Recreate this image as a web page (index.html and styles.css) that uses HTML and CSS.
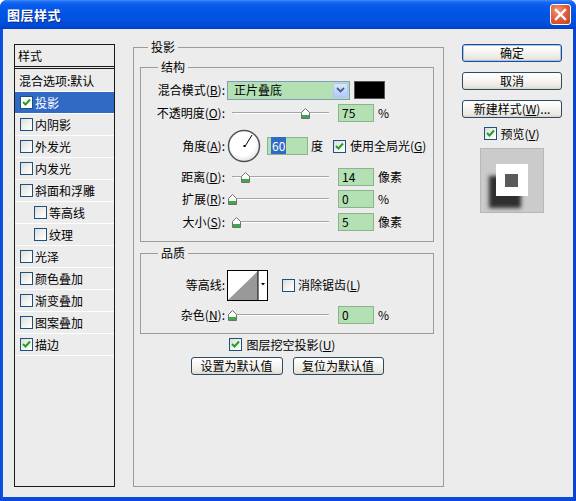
FILE: index.html
```html
<!DOCTYPE html>
<html lang="zh-CN">
<head>
<meta charset="utf-8">
<title>图层样式</title>
<link rel="stylesheet" href="styles.css">
</head>
<body>
<div class="window">
  <div class="titlebar">
    <span class="title">图层样式</span>
    <span class="close"><svg width="19" height="19" viewBox="0 0 19 19"><path d="M5 5 L14 14 M14 5 L5 14" stroke="#fff" stroke-width="2.4" stroke-linecap="square"/></svg></span>
  </div>
  <div class="client">
    <div class="styles-list">
      <div class="list-head">样式</div>
      <div class="list-item first">混合选项:默认</div>
      <div class="list-item selected"><span class="cb"><svg viewBox="0 0 11 11"><path d="M2 5 L4.5 7.5 L9 2.5" fill="none" stroke="#21A121" stroke-width="2"/></svg></span>投影</div>
      <div class="list-item"><span class="cb"></span>内阴影</div>
      <div class="list-item"><span class="cb"></span>外发光</div>
      <div class="list-item"><span class="cb"></span>内发光</div>
      <div class="list-item"><span class="cb"></span>斜面和浮雕</div>
      <div class="list-item sub"><span class="cb"></span>等高线</div>
      <div class="list-item sub"><span class="cb"></span>纹理</div>
      <div class="list-item"><span class="cb"></span>光泽</div>
      <div class="list-item"><span class="cb"></span>颜色叠加</div>
      <div class="list-item"><span class="cb"></span>渐变叠加</div>
      <div class="list-item"><span class="cb"></span>图案叠加</div>
      <div class="list-item"><span class="cb"><svg viewBox="0 0 11 11"><path d="M2 5 L4.5 7.5 L9 2.5" fill="none" stroke="#21A121" stroke-width="2"/></svg></span>描边</div>
    </div>

    <div class="group main-group">
      <div class="legend main-legend">投影</div>

      <div class="group sub-group structure">
        <div class="legend sub-legend">结构</div>
        <div class="rows">
          <div class="row r-blend">
            <span class="label">混合模式(<u>B</u>):</span>
            <div class="select"><span class="select-text">正片叠底</span><span class="select-btn"><svg width="9" height="6" viewBox="0 0 9 6"><path d="M1 1 L4.5 4.5 L8 1" fill="none" stroke="#4D6185" stroke-width="1.8"/></svg></span></div>
            <span class="swatch"></span>
          </div>
          <div class="row r-opacity">
            <span class="label">不透明度(<u>O</u>):</span>
            <div class="slider"><span class="track"></span><svg class="thumb" style="left:74px" width="9" height="11" viewBox="0 0 9 11"><path d="M4.5 0.5 L8.5 4.5 L8.5 10.5 L0.5 10.5 L0.5 4.5 Z" fill="#fff" stroke="#707070"/><rect x="1" y="7" width="7" height="3" fill="#3DA94B"/></svg></div>
            <div class="num">75</div>
            <span class="unit">%</span>
          </div>
          <div class="row r-angle">
            <span class="label">角度(<u>A</u>):</span>
            <svg class="dial" width="34" height="34" viewBox="0 0 34 34"><defs><radialGradient id="dg" cx="0.45" cy="0.4" r="0.6"><stop offset="0.7" stop-color="#ffffff"/><stop offset="1" stop-color="#e2e2e2"/></radialGradient></defs><circle cx="17" cy="17" r="15.5" fill="url(#dg)" stroke="#4F5358" stroke-width="1.5"/><path d="M18 17.5 L25 6" stroke="#000" stroke-width="1"/><rect x="16.5" y="16" width="2" height="2" fill="#000"/></svg>
            <div class="num angle-num"><span class="sel">60</span></div>
            <span class="unit deg">度</span>
            <span class="cb global"><svg viewBox="0 0 11 11"><path d="M2 5 L4.5 7.5 L9 2.5" fill="none" stroke="#21A121" stroke-width="2"/></svg></span>
            <span class="cb-label">使用全局光(<u>G</u>)</span>
          </div>
          <div class="row r-distance">
            <span class="label">距离(<u>D</u>):</span>
            <div class="slider"><span class="track"></span><svg class="thumb" style="left:14px" width="9" height="11" viewBox="0 0 9 11"><path d="M4.5 0.5 L8.5 4.5 L8.5 10.5 L0.5 10.5 L0.5 4.5 Z" fill="#fff" stroke="#707070"/><rect x="1" y="7" width="7" height="3" fill="#3DA94B"/></svg></div>
            <div class="num">14</div>
            <span class="unit">像素</span>
          </div>
          <div class="row r-spread">
            <span class="label">扩展(<u>R</u>):</span>
            <div class="slider"><span class="track"></span><svg class="thumb" style="left:1px" width="9" height="11" viewBox="0 0 9 11"><path d="M4.5 0.5 L8.5 4.5 L8.5 10.5 L0.5 10.5 L0.5 4.5 Z" fill="#fff" stroke="#707070"/><rect x="1" y="7" width="7" height="3" fill="#3DA94B"/></svg></div>
            <div class="num">0</div>
            <span class="unit">%</span>
          </div>
          <div class="row r-size">
            <span class="label">大小(<u>S</u>):</span>
            <div class="slider"><span class="track"></span><svg class="thumb" style="left:5px" width="9" height="11" viewBox="0 0 9 11"><path d="M4.5 0.5 L8.5 4.5 L8.5 10.5 L0.5 10.5 L0.5 4.5 Z" fill="#fff" stroke="#707070"/><rect x="1" y="7" width="7" height="3" fill="#3DA94B"/></svg></div>
            <div class="num">5</div>
            <span class="unit">像素</span>
          </div>
        </div>
      </div>

      <div class="group sub-group quality">
        <div class="legend sub-legend">品质</div>
        <div class="rows">
          <div class="row r-contour">
            <span class="label">等高线:</span>
            <svg class="contour" width="41" height="31" viewBox="0 0 41 31"><rect x="0.5" y="0.5" width="40" height="30" fill="#fff" stroke="#000"/><path d="M1 30 L31 1 L31 30 Z" fill="#999"/><path d="M31 1 L31 30" stroke="#000" stroke-width="1"/><path d="M34 13 L38 13 L36 15.5 Z" fill="#000"/></svg>
            <span class="cb antialias"></span>
            <span class="cb-label">消除锯齿(<u>L</u>)</span>
          </div>
          <div class="row r-noise">
            <span class="label">杂色(<u>N</u>):</span>
            <div class="slider"><span class="track"></span><svg class="thumb" style="left:1px" width="9" height="11" viewBox="0 0 9 11"><path d="M4.5 0.5 L8.5 4.5 L8.5 10.5 L0.5 10.5 L0.5 4.5 Z" fill="#fff" stroke="#707070"/><rect x="1" y="7" width="7" height="3" fill="#3DA94B"/></svg></div>
            <div class="num">0</div>
            <span class="unit">%</span>
          </div>
        </div>
      </div>

      <div class="knockout">
        <span class="cb"><svg viewBox="0 0 11 11"><path d="M2 5 L4.5 7.5 L9 2.5" fill="none" stroke="#21A121" stroke-width="2"/></svg></span>
        <span class="cb-label">图层挖空投影(<u>U</u>)</span>
      </div>
      <div class="defaults">
        <span class="btn btn-set">设置为默认值</span>
        <span class="btn btn-reset">复位为默认值</span>
      </div>
    </div>

    <div class="side">
      <span class="btn side-btn default">确定</span>
      <span class="btn side-btn">取消</span>
      <span class="btn side-btn">新建样式(<u>W</u>)...</span>
      <div class="preview-check">
        <span class="cb"><svg viewBox="0 0 11 11"><path d="M2 5 L4.5 7.5 L9 2.5" fill="none" stroke="#21A121" stroke-width="2"/></svg></span>
        <span class="cb-label">预览(<u>V</u>)</span>
      </div>
      <div class="preview">
        <div class="preview-square"><span class="preview-inner"></span></div>
      </div>
    </div>
  </div>
</div>
</body>
</html>
```

FILE: styles.css
```css
* { box-sizing: border-box; }
html, body { margin: 0; padding: 0; }
body {
  width: 576px;
  height: 501px;
  overflow: hidden;
  background: #ffffff;
  font-family: "Noto Sans CJK SC", "Noto Sans CJK JP", sans-serif;
  font-size: 12px;
  line-height: 1;
  color: #000;
}

.window {
  width: 576px;
  height: 501px;
  display: flex;
  flex-direction: column;
  background: linear-gradient(90deg, #0A44D0 0, #1458E6 2px, #0A4AD8 3px, #0A4AD8 573px, #0840C8 576px);
  border-radius: 7px 7px 0 0;
  overflow: hidden;
}

.titlebar {
  height: 29px;
  flex: none;
  display: flex;
  align-items: center;
  justify-content: space-between;
  padding: 0 5px 0 7px;
  background: linear-gradient(180deg, #3D8FFC 0px, #1A6AF3 2px, #0A5CEC 5px, #0056E6 12px, #0052E0 20px, #0049D6 26px, #003FC9 29px);
}
.title {
  color: #fff;
  font-weight: bold;
  font-size: 13px;
  line-height: 16px;
  text-shadow: 1px 1px 0 #0A2A8A;
  letter-spacing: 0.5px;
}
.close {
  width: 21px;
  height: 21px;
  border: 1px solid #fff;
  border-radius: 3px;
  background: radial-gradient(circle at 35% 30%, #F09A7E 0, #E0603E 45%, #C63F1E 100%);
  display: flex;
  align-items: center;
  justify-content: center;
}

.client {
  flex: 1;
  margin: 0 3px 4px 3px;
  background: #ECECEC;
  display: flex;
  align-items: flex-start;
  padding: 15px 0 0 11px;
}

/* left list */
.styles-list {
  flex: none;
  width: 101px;
  height: 443px;
  border: 1px solid #1a1a1a;
}
.list-head {
  height: 24px;
  border-bottom: 3px double #1a1a1a;
  padding-left: 3px;
  line-height: 21px;
}
.list-item {
  height: 22px;
  border-bottom: 1px solid #ffffff;
  display: flex;
  align-items: center;
  padding-left: 5px;
  line-height: 21px;
}
.list-item.first { height: 23px; padding-left: 4px; }
.list-item.sub { padding-left: 19px; }
.list-item.selected { background: #316AC5; color: #fff; }
.list-item .cb { margin-right: 2px; }

/* checkbox */
.cb {
  flex: none;
  width: 13px;
  height: 13px;
  border: 1px solid #1C5180;
  background: linear-gradient(135deg, #DCDCD7 0%, #F4F4F1 60%, #FFFFFF 100%);
  display: inline-flex;
  align-items: center;
  justify-content: center;
}
.cb svg { width: 11px; height: 11px; display: block; }
.selected .cb { background: #fff; border-color: #1C5180; }
.cb-label { line-height: 16px; }

/* group boxes */
.group {
  border: 1px solid #9C9C9C;
  flex: none;
}
.legend {
  width: fit-content;
  height: 14px;
  line-height: 14px;
  margin-top: -8px;
  padding: 0 3px;
  background: #ECECEC;
}
.main-group {
  width: 311px;
  height: 440px;
  margin: 3px 0 0 18px;
  padding: 0 9px 0 6px;
}
.main-legend { margin-left: 8px; }
.sub-legend { margin-left: 17px; }

.structure {
  margin-top: 13px;
  padding-bottom: 8px;
}
.structure .rows { margin-top: 5px; }

.quality {
  margin-top: 11px;
  padding-bottom: 7px;
}
.quality .rows { margin-top: 6px; }

.row {
  display: flex;
  align-items: center;
}
.label {
  flex: none;
  width: 84px;
  text-align: right;
  line-height: 16px;
  white-space: nowrap;
}
.r-blend { height: 22px; }
.r-opacity { height: 24px; }
.r-angle { height: 42px; }
.r-distance { height: 20px; }
.r-spread { height: 24px; }
.r-size { height: 22px; }
.r-contour { height: 38px; }
.r-noise { height: 22px; }

/* select */
.select {
  margin-left: 2px;
  width: 123px;
  height: 19px;
  border: 1px solid #7F9DB9;
  background: #B4E1B4;
  display: flex;
  align-items: center;
  justify-content: space-between;
  padding: 0 1px 0 6px;
}
.select-text { line-height: 16px; }
.select-btn {
  width: 15px;
  height: 15px;
  border: 1px solid #B1C6F4;
  border-radius: 2px;
  background: linear-gradient(180deg, #DCE6FD 0%, #C2D3FC 60%, #B3C8F8 100%);
  display: flex;
  align-items: center;
  justify-content: center;
}
.swatch {
  margin-left: 4px;
  width: 31px;
  height: 18px;
  background: #000;
  border: 1px solid #555;
}

/* slider */
.slider {
  position: relative;
  flex: none;
  margin-left: 2px;
  width: 104px;
  height: 14px;
}
.track {
  position: absolute;
  left: 5px;
  top: 6px;
  width: 97px;
  height: 2px;
  border-top: 1px solid #A4A4A4;
  border-bottom: 1px solid #FFFFFF;
  border-left: 1px solid #A4A4A4;
  border-radius: 1px 0 0 1px;
}
.thumb {
  position: absolute;
  top: 2px;
  display: block;
}

/* number fields */
.num {
  flex: none;
  margin-left: 7px;
  width: 36px;
  height: 18px;
  background: #B4E1B4;
  border: 1px solid #8DB38D;
  padding-left: 3px;
  line-height: 16px;
}
.unit { margin-left: 4px; line-height: 16px; }

.dial { margin-left: 2px; display: block; flex: none; }
.angle-num { width: 41px; margin-left: 6px; }
.sel { background: #316AC5; color: #fff; padding: 0 1px; }
.unit.deg { margin-left: 3px; }
.cb.global { margin-left: 10px; }
.r-angle .cb-label { margin-left: 4px; }

.contour { margin-left: 2px; display: block; flex: none; }
.cb.antialias { margin-left: 14px; }
.r-contour .cb-label { margin-left: 3px; }

.knockout {
  height: 21px;
  display: flex;
  align-items: center;
  justify-content: center;
  padding-right: 10px;
}
.knockout .cb-label { margin-left: 5px; }

.defaults {
  margin-top: 2px;
  display: flex;
  justify-content: center;
  gap: 10px;
}

/* buttons */
.btn {
  display: flex;
  align-items: center;
  justify-content: center;
  height: 18px;
  border: 1px solid #2B4A66;
  border-radius: 3px;
  background: linear-gradient(180deg, #FFFFFF 0%, #F6F5F1 45%, #E9E7E0 85%, #D9D5CB 100%);
  line-height: 16px;
  white-space: nowrap;
}
.btn-set { width: 92px; }
.btn-reset { width: 91px; }

.side {
  flex: none;
  width: 100px;
  margin-left: 18px;
  display: flex;
  flex-direction: column;
  align-items: center;
}
.side-btn { width: 100px; margin-bottom: 10px; }
.side-btn.default {
  border-color: #1F4E8C;
  box-shadow: inset 0 0 0 1px #A6C2EE;
}
.preview-check {
  margin-top: -1px;
  height: 13px;
  display: flex;
  align-items: center;
}
.preview-check .cb-label { margin-left: 3px; }
.preview {
  margin-top: 8px;
  width: 64px;
  height: 65px;
  background: #CBCBCB;
  border: 1px solid #B8B8B8;
  padding: 15px 0 0 15px;
}
.preview-square {
  width: 32px;
  height: 32px;
  background: #fff;
  box-shadow: -7px 12px 4px rgba(20, 20, 20, 0.85);
  padding: 10px 0 0 9px;
}
.preview-inner {
  display: block;
  width: 13px;
  height: 13px;
  background: #5A5A5A;
}
```
